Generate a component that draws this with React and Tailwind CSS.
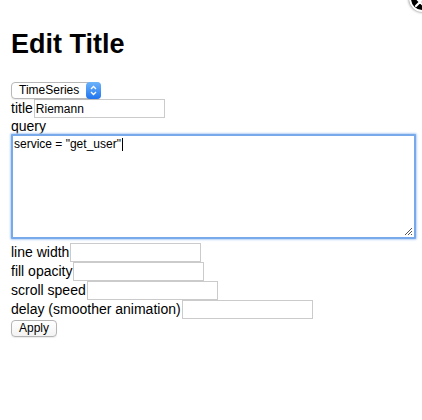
import React from "react";

function Row({ label }) {
  return (
    <div className="flex h-[19px] items-center">
      <span className="whitespace-nowrap text-[14px] leading-[19px]">{label}</span>
      <div className="ml-[1px] box-border h-[19px] w-[131px] shrink-0 border border-[#cbcbcb] bg-white" />
    </div>
  );
}

export default function App() {
  return (
    <div className="relative min-h-[420px] w-full overflow-hidden bg-white pl-[11px] pt-[28px] font-['Liberation_Sans',Arial,sans-serif] text-black">
      {/* close button overlay (clipped at top-right) */}
      <div className="absolute right-[-14px] top-[-15px] flex h-[27px] w-[27px] items-center justify-center rounded-full border-2 border-white bg-black shadow-[0_0_3px_rgba(0,0,0,0.6)]">
        <svg width="12" height="12" viewBox="0 0 12 12" className="-translate-x-[3px] translate-y-[3px]">
          <path d="M2 2 L10 10 M10 2 L2 10" stroke="white" strokeWidth="2.2" strokeLinecap="round" />
        </svg>
      </div>

      <h1 className="text-[27px] font-bold leading-[32px]">Edit Title</h1>

      {/* select */}
      <div className="mt-[22px] h-[17px]">
        <div className="relative box-border flex h-[17px] w-[90px] items-center rounded-[4px] border border-[#b8b8b8] bg-white shadow-[0_1px_1px_rgba(0,0,0,0.08)]">
          <span className="pl-[7px] text-[12px] leading-[15px]">TimeSeries</span>
          <div className="absolute bottom-[-1px] right-[-1px] top-[-1px] flex w-[15px] items-center justify-center rounded-[4px] bg-gradient-to-b from-[#6cb3fa] to-[#1f73ef]">
            <svg width="7" height="11" viewBox="0 0 7 11">
              <path d="M1 4 L3.5 1.5 L6 4" fill="none" stroke="white" strokeWidth="1.3" />
              <path d="M1 7 L3.5 9.5 L6 7" fill="none" stroke="white" strokeWidth="1.3" />
            </svg>
          </div>
        </div>
      </div>

      {/* title row */}
      <div className="flex h-[19px] items-center">
        <span className="whitespace-nowrap text-[14px] leading-[19px]">title</span>
        <div className="ml-[1px] box-border flex h-[19px] w-[131px] shrink-0 items-center border border-[#cbcbcb] bg-white pl-[1px] text-[12px]">
          Riemann
        </div>
      </div>

      {/* query */}
      <div className="h-[15px] text-[14px] leading-[16px]">query</div>

      <div className="relative mt-[1px] box-border h-[105px] w-[405px] rounded-[1px] border-2 border-[#78a9ea] bg-white pl-[1px] pt-[1px] text-[12px] leading-[14px] shadow-[0_0_2px_1px_#b9d3f5]">
        <span>service = "get_user"</span>
        <span className="ml-[1px] inline-block h-[13px] w-px align-[-3px] bg-black" />
        <svg width="9" height="9" viewBox="0 0 9 9" className="absolute bottom-[1px] right-[1px]">
          <path d="M1 8 L8 1 M4 8 L8 4 M7 8 L8 7" stroke="#555" strokeWidth="1" />
        </svg>
      </div>

      <div className="mt-[4px]">
        <Row label="line width" />
        <Row label="fill opacity" />
        <Row label="scroll speed" />
        <Row label="delay (smoother animation)" />
      </div>

      <button className="mt-[1px] box-border flex h-[17px] w-[46px] items-center justify-center rounded-[4px] border border-[#b5b5b5] bg-gradient-to-b from-white to-[#f3f3f3] text-[12px] leading-[15px] text-black shadow-[0_1px_1px_rgba(0,0,0,0.08)]">
        Apply
      </button>
    </div>
  );
}
